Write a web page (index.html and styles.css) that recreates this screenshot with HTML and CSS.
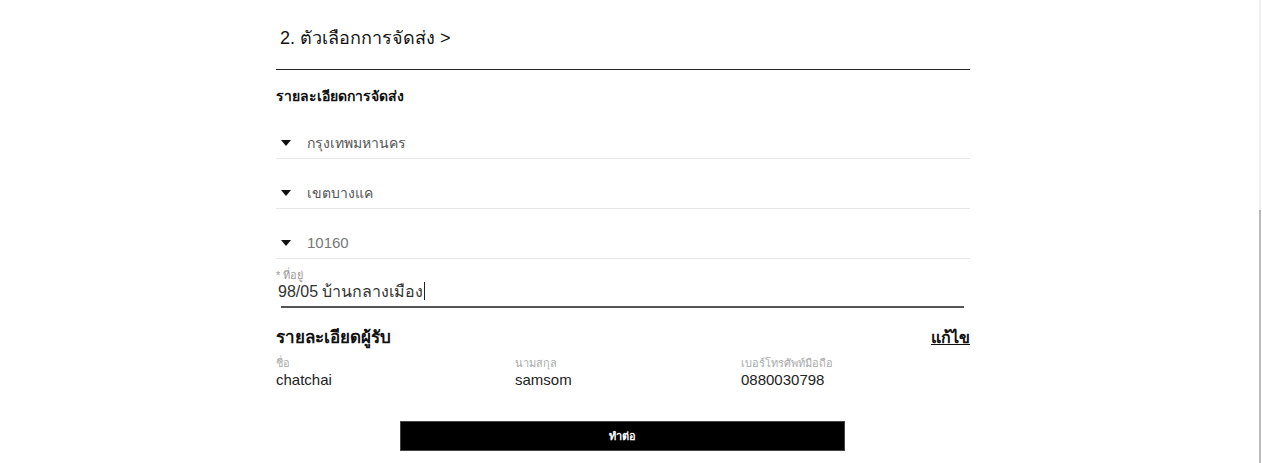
FILE: index.html
```html
<!DOCTYPE html>
<html>
<head>
	<title>ตัวเลือกการจัดส่ง</title>
	<meta charset="UTF-8">
	<meta name="viewport" content="width=device-width, initial-scale=1.0">
	<link rel="stylesheet" href="styles.css">
</head>
<body>
	<div class="checkout">
		<h2 class="step-title">2. ตัวเลือกการจัดส่ง &gt;</h2>

		<h3 class="section-title">รายละเอียดการจัดส่ง</h3>
		<div class="select-row">
			<span class="caret"></span>
			<span class="select-text">กรุงเทพมหานคร</span>
		</div>
		<div class="select-row">
			<span class="caret"></span>
			<span class="select-text">เขตบางแค</span>
		</div>
		<div class="select-row">
			<span class="caret"></span>
			<span class="select-text latin">10160</span>
		</div>

		<div class="address">
			<div class="field-label">* ที่อยู่</div>
			<div class="address-value">98/05 บ้านกลางเมือง<span class="cursor"></span></div>
		</div>
		<div class="address-line"></div>

		<div class="recipient-head">
			<h3 class="recipient-title">รายละเอียดผู้รับ</h3>
			<a class="edit-link" href="#">แก้ไข</a>
		</div>
		<div class="recipient">
			<div>
				<div class="field-label">ชื่อ</div>
				<div class="field-value">chatchai</div>
			</div>
			<div>
				<div class="field-label">นามสกุล</div>
				<div class="field-value">samsom</div>
			</div>
			<div>
				<div class="field-label">เบอร์โทรศัพท์มือถือ</div>
				<div class="field-value">0880030798</div>
			</div>
		</div>

		<button class="next-btn">ทำต่อ</button>
	</div>
	<div class="scrollbar"><div class="thumb"></div></div>
</body>
</html>
```

FILE: styles.css
```css
body {
	margin: 0;
	background-color: #fff;
	font-family: "Liberation Sans", Tahoma, sans-serif;
	color: #111;
}
.checkout {
	width: 694px;
	margin-left: 276px;
}
.step-title {
	margin: 0;
	height: 70px;
	padding-left: 4px;
	padding-top: 27px;
	box-sizing: border-box;
	line-height: 22px;
	font-size: 18px;
	font-weight: normal;
	border-bottom: 1px solid #222;
}
.section-title {
	margin: 16px 0 3px;
	line-height: 20px;
	font-size: 14px;
	font-weight: bold;
	color: #111;
}
.select-row {
	display: flex;
	align-items: center;
	padding: 24px 0 5px 5px;
	line-height: 20px;
	border-bottom: 1px solid #e6e6e6;
}
.caret {
	width: 0;
	height: 0;
	border-left: 5px solid transparent;
	border-right: 5px solid transparent;
	border-top: 6px solid #111;
	margin-right: 16px;
}
.select-text {
	font-size: 14px;
	color: #555;
}
.select-text.latin {
	font-size: 15px;
	color: #777;
}
.address {
	padding-top: 9px;
}
.field-label {
	line-height: 14px;
	font-size: 11px;
	color: #999;
}
.address-value {
	padding-left: 2px;
	line-height: 20px;
	font-size: 16px;
	color: #333;
}
.cursor {
	display: inline-block;
	width: 1px;
	height: 18px;
	background-color: #222;
	vertical-align: -3px;
	margin-left: 1px;
}
.address-line {
	height: 2px;
	margin: 4px 6px 0 5px;
	background-color: #555;
}
.recipient-head {
	display: flex;
	justify-content: space-between;
	align-items: center;
	margin-top: 18px;
	line-height: 24px;
}
.recipient-title {
	margin: 0;
	font-size: 17px;
	font-weight: bold;
}
.edit-link {
	font-size: 16px;
	font-weight: bold;
	color: #111;
	text-decoration: underline;
}
.recipient {
	display: grid;
	grid-template-columns: 239px 226px 1fr;
	margin-top: 6px;
}
.recipient .field-label {
	color: #aaa;
}
.field-value {
	line-height: 20px;
	font-size: 15px;
	color: #222;
}
.next-btn {
	display: block;
	width: 445px;
	height: 30px;
	margin: 31px 0 0 124px;
	border: 1px solid #444;
	background-color: #000;
	color: #fff;
	font-family: Tahoma, "Liberation Sans", sans-serif;
	font-size: 11px;
	font-weight: bold;
	cursor: pointer;
}
.scrollbar {
	position: fixed;
	top: 0;
	right: 1px;
	bottom: 0;
	width: 2px;
	background-color: #eee;
}
.thumb {
	margin-top: 210px;
	height: 253px;
	background-color: #bbb;
}
```
